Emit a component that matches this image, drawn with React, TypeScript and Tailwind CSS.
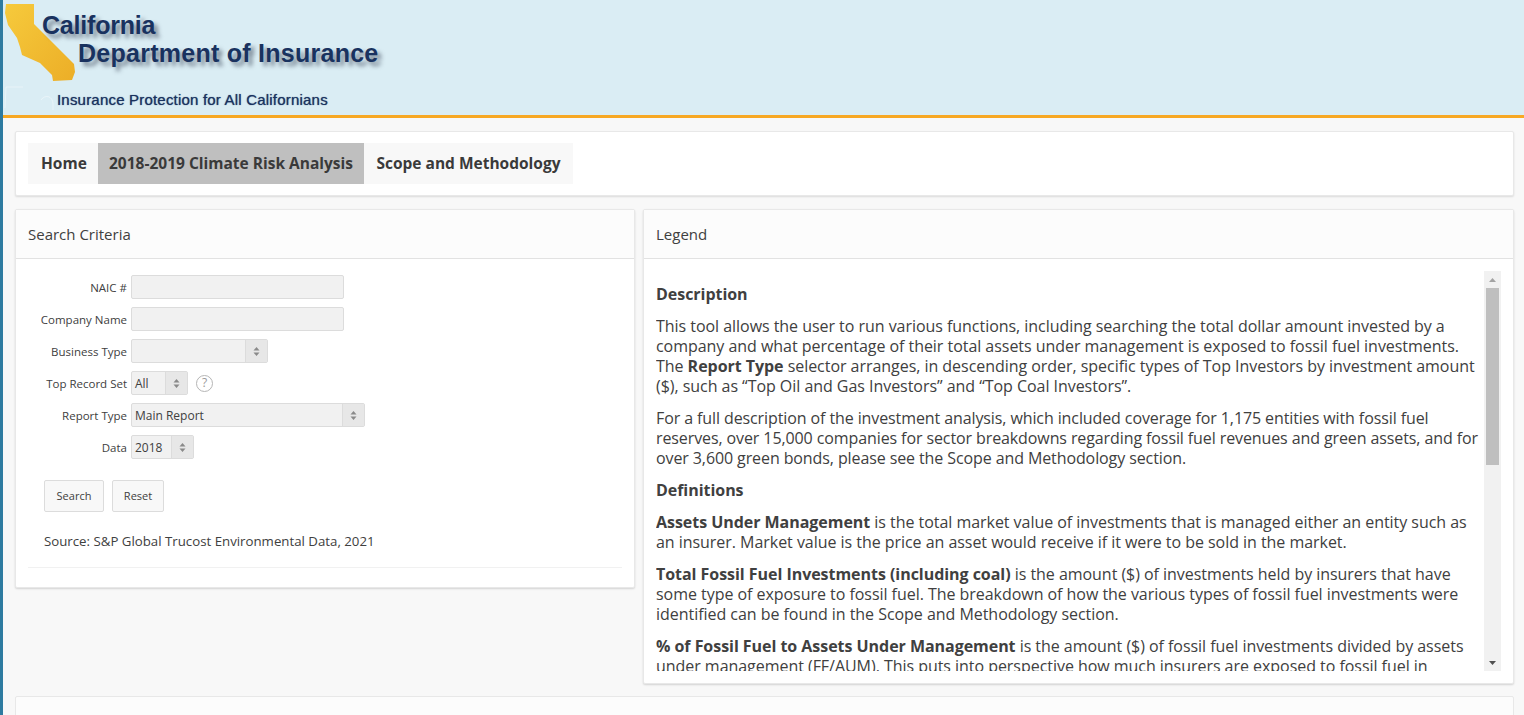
const fields = [
  { label: "NAIC #", kind: "input", width: "w-[213px]" },
  { label: "Company Name", kind: "input", width: "w-[213px]" },
  { label: "Business Type", kind: "select", width: "w-[137px]", value: "" },
  { label: "Top Record Set", kind: "select", width: "w-[57px]", value: "All", help: true },
  { label: "Report Type", kind: "select", width: "w-[234px]", value: "Main Report" },
  { label: "Data", kind: "select", width: "w-[63px]", value: "2018" },
]

function SelectArrows() {
  return (
    <svg width="7" height="9" viewBox="0 0 7 9" className="text-[#8a8a8a]">
      <path d="M3.5 0 L6.5 3.5 H0.5 Z M0.5 5.5 H6.5 L3.5 9 Z" fill="currentColor" />
    </svg>
  )
}

function Field({ field }: { field: (typeof fields)[number] }) {
  return (
    <div className="flex items-center h-[24px] mb-[8px]">
      <label className="w-[115px] pr-[4px] pt-[2px] text-right text-[11.5px] text-[#404040]">{field.label}</label>
      {field.kind === "input" ? (
        <div className={`${field.width} h-[24px] bg-[#f1f1f1] border border-[#dcdcdc] rounded-[2px]`} />
      ) : (
        <div className={`${field.width} h-[24px] flex bg-[#f1f1f1] border border-[#dcdcdc] rounded-[2px] text-[12px] text-[#404040]`}>
          <span className="flex-1 pl-[3px] leading-[24px]">{field.value}</span>
          <span className="w-[22px] flex items-center justify-center bg-[#e7e7e7] border-l border-[#dcdcdc]">
            <SelectArrows />
          </span>
        </div>
      )}
      {field.help && (
        <span className="ml-[8px] w-[17px] h-[17px] rounded-full border border-[#b5b5b5] flex items-center justify-center text-[12px] leading-none text-[#9a9a9a]">
          ?
        </span>
      )}
    </div>
  )
}

function Logo() {
  return (
    <div className="relative h-[115px] w-[420px]">
      <svg width="90" height="112" viewBox="0 0 90 112" className="absolute left-0 top-0">
        <defs>
          <linearGradient id="gold" x1="0" y1="0" x2="1" y2="1">
            <stop offset="0" stopColor="#f6ca3c" />
            <stop offset="1" stopColor="#ecae27" />
          </linearGradient>
        </defs>
        <path
          d="M3 4 H31 V24 L71 64 L72 72 L69 80 L50 81 L49 75 L37 63 L19 55 L17 47 L14 38 L5 25 L2 13 Z"
          fill="url(#gold)"
        />
        <path
          d="M3 87 H20 M3 87 L2 108 M38 100 C42 94 50 96 50 104 V110"
          fill="none"
          stroke="#ffffff"
          strokeOpacity="0.4"
          strokeWidth="1"
        />
      </svg>
      <div className="absolute left-[39px] top-[10px] font-['Liberation_Sans',sans-serif] font-bold text-[25px] tracking-[-0.2px] leading-[30px] text-[#19325f] [text-shadow:4px_4px_4px_rgba(40,50,70,0.55)]">
        California
      </div>
      <div className="absolute left-[75px] top-[38px] font-['Liberation_Sans',sans-serif] font-bold text-[25px] tracking-[0.26px] leading-[30px] text-[#19325f] [text-shadow:4px_4px_4px_rgba(40,50,70,0.55)] whitespace-nowrap">
        Department of Insurance
      </div>
      <div className="absolute left-[54px] top-[92px] font-['Liberation_Sans',sans-serif] text-[15px] tracking-[0.2px] leading-[16px] text-[#19325f] [text-shadow:0_0_1px_rgba(25,50,95,0.8)] whitespace-nowrap">
        Insurance Protection for All Californians
      </div>
    </div>
  )
}

export default function App() {
  return (
    <div className="h-[715px] overflow-hidden bg-[#f8f8f8] border-l-[3px] border-[#2e7ba0] font-['Open_Sans',sans-serif] text-[#404040]">
      <header className="h-[118px] bg-[#daedf4] border-b-[3px] border-[#f7a823]">
        <Logo />
      </header>

      <div className="pl-[12px] pr-[10px] pt-[13px]">
        <nav className="h-[65px] bg-white border border-[#e8e8e8] rounded-[2px] shadow-[0_1px_2px_rgba(0,0,0,0.12)] pl-[12px] pt-[11px]">
          <ul className="inline-flex h-[41px] bg-[#f8f8f8] text-[15.5px] font-bold text-[#3a3a3a]">
            <li className="flex items-center px-[13px] w-[70px]">Home</li>
            <li className="flex items-center justify-center w-[266px] bg-[#bfbfbf]">2018-2019 Climate Risk Analysis</li>
            <li className="flex items-center justify-center w-[209px]">Scope and Methodology</li>
          </ul>
        </nav>

        <div className="flex items-start gap-[8px] mt-[13px]">
          <section className="w-[620px] h-[379px] bg-white border border-[#e8e8e8] rounded-[2px] shadow-[0_1px_2px_rgba(0,0,0,0.15)]">
            <h2 className="h-[49px] px-[12px] flex items-center bg-[#fcfcfc] border-b border-[#e2e2e2] text-[15px] text-[#404040]">
              Search Criteria
            </h2>
            <div className="pt-[16px]">
              {fields.map((field) => (
                <Field key={field.label} field={field} />
              ))}
              <div className="flex gap-[8px] pl-[28px] pt-[13px]">
                <button className="w-[60px] h-[32px] bg-[#f8f8f8] border border-[#dcdcdc] rounded-[2px] text-[11px] text-[#404040]">Search</button>
                <button className="w-[52px] h-[32px] bg-[#f8f8f8] border border-[#dcdcdc] rounded-[2px] text-[11px] text-[#404040]">Reset</button>
              </div>
              <p className="pl-[28px] pt-[20px] text-[13.25px] leading-[18px] text-[#404040]">
                Source: S&amp;P Global Trucost Environmental Data, 2021
              </p>
              <div className="mx-[12px] mt-[17px] border-t border-[#f1f1f1]" />
            </div>
          </section>

          <section className="flex-1 h-[475px] bg-white border border-[#e8e8e8] rounded-[2px] shadow-[0_1px_2px_rgba(0,0,0,0.15)]">
            <h2 className="h-[49px] px-[12px] flex items-center bg-[#fcfcfc] border-b border-[#e2e2e2] text-[15px] text-[#404040]">
              Legend
            </h2>
            <div className="flex pl-[12px] pr-[12px] pt-[12px]">
              <div className="flex-1 h-[400px] overflow-hidden pr-[3px] pt-[13px] text-[16px] tracking-[-0.04px] leading-[20px] text-[#404040]">
                <h3 className="font-bold mb-[12px]">Description</h3>
                <p className="mb-[12px]">
                  This tool allows the user to run various functions, including searching the total dollar amount invested by a company and what percentage of their total assets under management is exposed to fossil fuel investments. The <b>Report Type</b> selector arranges, in descending order, specific types of Top Investors by investment amount ($), such as “Top Oil and Gas Investors” and “Top Coal Investors”.
                </p>
                <p className="mb-[12px] tracking-[-0.1px]">
                  For a full description of the investment analysis, which included coverage for 1,175 entities with fossil fuel reserves, over 15,000 companies for sector breakdowns regarding fossil fuel revenues and green assets, and for over 3,600 green bonds, please see the Scope and Methodology section.
                </p>
                <h3 className="font-bold mb-[12px]">Definitions</h3>
                <p className="mb-[12px]">
                  <b>Assets Under Management</b> is the total market value of investments that is managed either an entity such as an insurer. Market value is the price an asset would receive if it were to be sold in the market.
                </p>
                <p className="mb-[12px]">
                  <b>Total Fossil Fuel Investments (including coal)</b> is the amount ($) of investments held by insurers that have some type of exposure to fossil fuel. The breakdown of how the various types of fossil fuel investments were identified can be found in the Scope and Methodology section.
                </p>
                <p>
                  <b>% of Fossil Fuel to Assets Under Management</b> is the amount ($) of fossil fuel investments divided by assets under management (FF/AUM). This puts into perspective how much insurers are exposed to fossil fuel in
                </p>
              </div>
              <div className="w-[17px] h-[400px] flex flex-col bg-[#f1f1f1]">
                <div className="h-[17px] flex items-center justify-center">
                  <svg width="7" height="4" viewBox="0 0 7 4"><path d="M3.5 0 L7 4 H0 Z" fill="#a3a3a3" /></svg>
                </div>
                <div className="mx-[2px] h-[177px] bg-[#bfbfbf]" />
                <div className="flex-1" />
                <div className="h-[17px] flex items-center justify-center">
                  <svg width="7" height="4" viewBox="0 0 7 4"><path d="M0 0 H7 L3.5 4 Z" fill="#505050" /></svg>
                </div>
              </div>
            </div>
          </section>
        </div>

        <div className="h-[60px] mt-[12px] bg-[#fcfcfc] border border-[#e8e8e8] rounded-[2px]" />
      </div>
    </div>
  )
}
